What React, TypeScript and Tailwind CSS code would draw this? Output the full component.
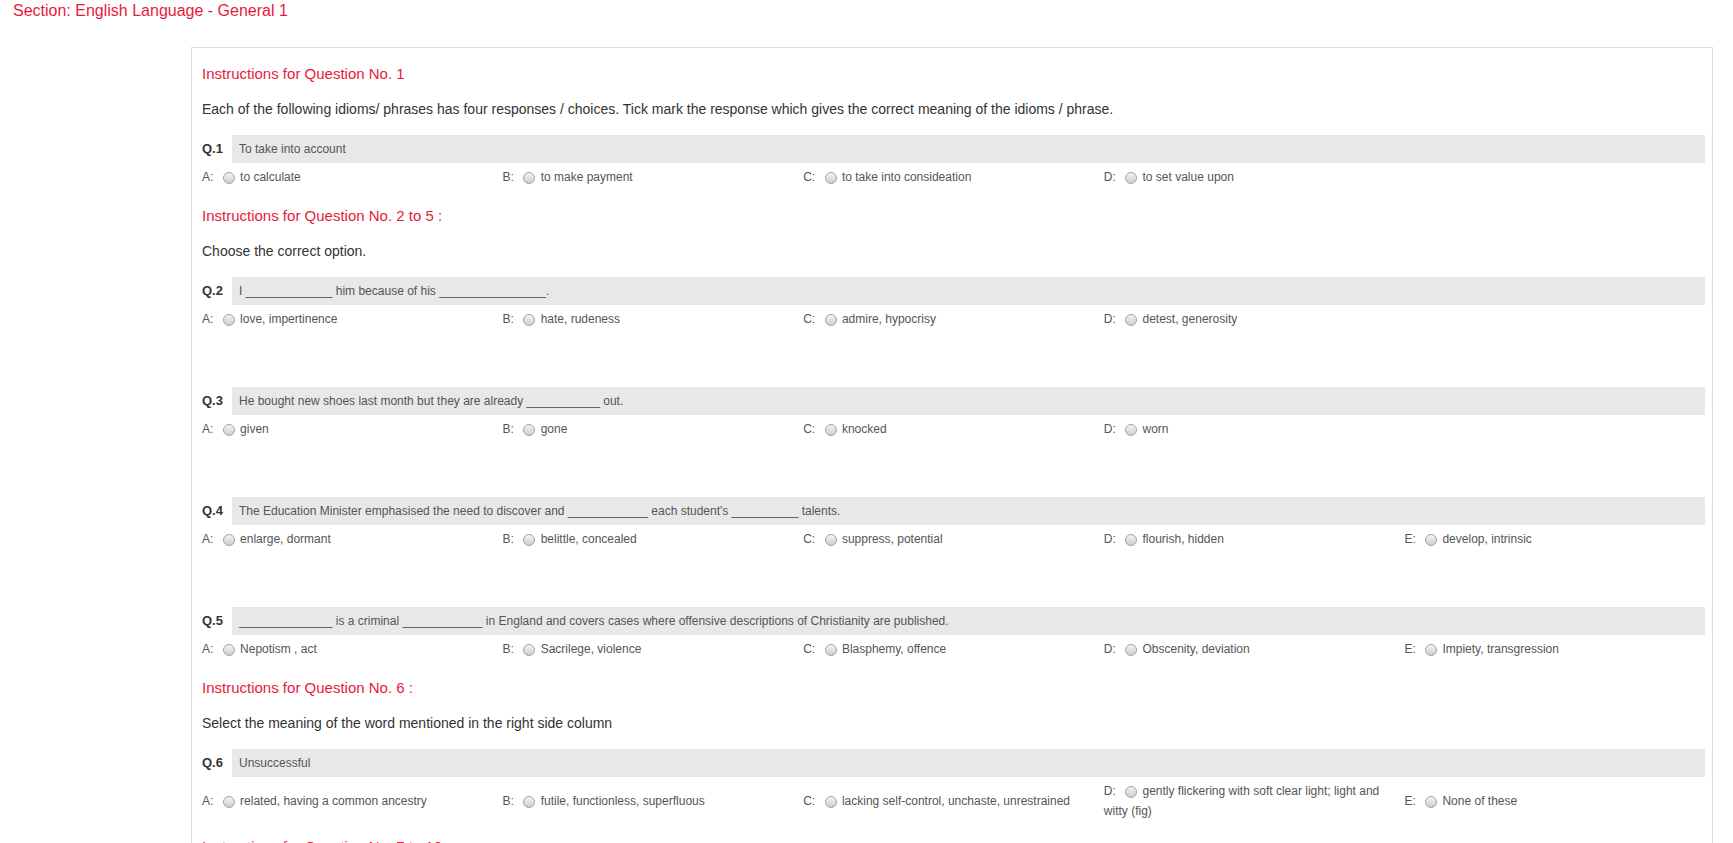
type Question = {
  no: number;
  text: string;
  options: string[];
};

type Block = {
  instruction: string;
  note: string;
  questions: Question[];
};

const blocks: Block[] = [
  {
    instruction: "Instructions for Question No. 1",
    note: "Each of the following idioms/ phrases has four responses / choices. Tick mark the response which gives the correct meaning of the idioms / phrase.",
    questions: [
      {
        no: 1,
        text: "To take into account",
        options: ["to calculate", "to make payment", "to take into consideation", "to set value upon"],
      },
    ],
  },
  {
    instruction: "Instructions for Question No. 2 to 5 :",
    note: "Choose the correct option.",
    questions: [
      {
        no: 2,
        text: "I _____________ him because of his ________________.",
        options: ["love, impertinence", "hate, rudeness", "admire, hypocrisy", "detest, generosity"],
      },
      {
        no: 3,
        text: "He bought new shoes last month but they are already ___________ out.",
        options: ["given", "gone", "knocked", "worn"],
      },
      {
        no: 4,
        text: "The Education Minister emphasised the need to discover and ____________ each student's __________ talents.",
        options: ["enlarge, dormant", "belittle, concealed", "suppress, potential", "flourish, hidden", "develop, intrinsic"],
      },
      {
        no: 5,
        text: "______________ is a criminal ____________ in England and covers cases where offensive descriptions of Christianity are published.",
        options: ["Nepotism , act", "Sacrilege, violence", "Blasphemy, offence", "Obscenity, deviation", "Impiety, transgression"],
      },
    ],
  },
  {
    instruction: "Instructions for Question No. 6 :",
    note: "Select the meaning of the word mentioned in the right side column",
    questions: [
      {
        no: 6,
        text: "Unsuccessful",
        options: [
          "related, having a common ancestry",
          "futile, functionless, superfluous",
          "lacking self-control, unchaste, unrestrained",
          "gently flickering with soft clear light; light and witty (fig)",
          "None of these",
        ],
      },
    ],
  },
  {
    instruction: "Instructions for Question No. 7 to 10 :",
    note: "Choose the word which is most nearly the same in meaning as the given word.",
    questions: [],
  },
];

const letters = ["A", "B", "C", "D", "E"];

function Radio() {
  return (
    <span className="inline-block w-[12px] h-[12px] ml-[6px] mr-[2px] rounded-full border border-[#a3a3a3] bg-gradient-to-b from-[#f3f3f3] to-[#cfcfcf] align-middle" />
  );
}

function QuestionRow({ q }: { q: Question }) {
  const tall = q.options.some((o) => o.length > 50);
  return (
    <div>
      <div className="flex h-[28px] items-center">
        <div className="w-[30px] shrink-0 text-[13px] font-bold text-[#333]">Q.{q.no}</div>
        <div className="flex h-full flex-1 items-center bg-[#e8e8e8] pl-[7px] text-[12px] text-[#555]">
          {q.text}
        </div>
      </div>
      <div
        className={
          tall
            ? "grid grid-cols-5 items-center pt-[4px] text-[12px] leading-[20px] text-[#555]"
            : "grid grid-cols-5 items-start h-[28px] pt-[6px] text-[12px] leading-[17px] text-[#555]"
        }
      >
        {q.options.map((opt, i) => (
          <div key={i} className="pr-[10px]">
            <span>{letters[i]}:</span> <Radio /> {opt}
          </div>
        ))}
      </div>
    </div>
  );
}

export default function App() {
  return (
    <div className="h-[843px] w-full overflow-hidden bg-white font-['Liberation_Sans',Arial,sans-serif]">
      <div className="pl-[13px] text-[16px] leading-[22px] text-[#e8193c]">
        Section: English Language - General 1
      </div>

      <div className="ml-[191px] mr-[20px] mt-[25px] border border-[#dcdcdc] pl-[10px] pr-[7px] pt-[16px] pb-[40px]">
        {blocks.map((block, bi) => (
          <div key={bi} className={bi === 0 ? "" : bi === 3 ? "mt-[16px]" : "mt-[15px]"}>
            <div className="text-[15px] leading-[20px] text-[#e8193c]">{block.instruction}</div>
            <div className="mt-[15px] text-[14px] leading-[20px] text-[#333]">{block.note}</div>
            {block.questions.map((q, qi) => (
              <div key={q.no} className={qi === 0 ? "mt-[16px]" : "mt-[54px]"}>
                <QuestionRow q={q} />
              </div>
            ))}
          </div>
        ))}
      </div>
    </div>
  );
}
